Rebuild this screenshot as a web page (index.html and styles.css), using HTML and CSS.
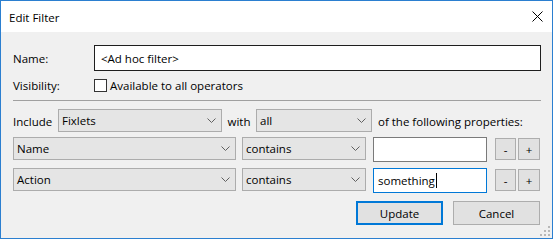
FILE: index.html
```html
<!DOCTYPE html>
<html lang="en">
<head>
    <meta charset="UTF-8">
    <title>Edit Filter</title>
    <link rel="stylesheet" href="styles.css">
</head>
<body>
    <div class="dialog">
        <div class="titlebar">
            <span class="title">Edit Filter</span>
            <svg class="close-icon" width="11" height="11" viewBox="0 0 11 11">
                <path d="M0.5 0.5 L10.5 10.5 M10.5 0.5 L0.5 10.5" stroke="#000" stroke-width="1"/>
            </svg>
        </div>

        <div class="content">
            <div class="field-row name-row">
                <span class="field-label">Name:</span>
                <div class="textbox textbox-dark">&lt;Ad hoc filter&gt;</div>
            </div>

            <div class="field-row visibility-row">
                <span class="field-label">Visibility:</span>
                <span class="checkbox"></span>
                <span class="checkbox-label">Available to all operators</span>
            </div>

            <div class="separator"></div>

            <div class="include-row">
                <span class="include-label">Include</span>
                <div class="dropdown dd-fixlets"><span>Fixlets</span><svg class="chevron" width="9" height="5" viewBox="0 0 9 5"><polyline points="0.5,0.5 4.5,4.5 8.5,0.5" fill="none" stroke="#606060"/></svg></div>
                <span class="with-label">with</span>
                <div class="dropdown dd-all"><span>all</span><svg class="chevron" width="9" height="5" viewBox="0 0 9 5"><polyline points="0.5,0.5 4.5,4.5 8.5,0.5" fill="none" stroke="#606060"/></svg></div>
                <span class="tail-label">of the following properties:</span>
            </div>

            <div class="condition-row first">
                <div class="dropdown dd-property"><span>Name</span><svg class="chevron" width="9" height="5" viewBox="0 0 9 5"><polyline points="0.5,0.5 4.5,4.5 8.5,0.5" fill="none" stroke="#606060"/></svg></div>
                <div class="dropdown dd-operator"><span>contains</span><svg class="chevron" width="9" height="5" viewBox="0 0 9 5"><polyline points="0.5,0.5 4.5,4.5 8.5,0.5" fill="none" stroke="#606060"/></svg></div>
                <div class="textbox value-box"></div>
                <button class="small-btn minus">-</button>
                <button class="small-btn plus">+</button>
            </div>

            <div class="condition-row second">
                <div class="dropdown dd-property"><span>Action</span><svg class="chevron" width="9" height="5" viewBox="0 0 9 5"><polyline points="0.5,0.5 4.5,4.5 8.5,0.5" fill="none" stroke="#606060"/></svg></div>
                <div class="dropdown dd-operator"><span>contains</span><svg class="chevron" width="9" height="5" viewBox="0 0 9 5"><polyline points="0.5,0.5 4.5,4.5 8.5,0.5" fill="none" stroke="#606060"/></svg></div>
                <div class="textbox value-box focused">something<span class="caret"></span></div>
                <button class="small-btn minus">-</button>
                <button class="small-btn plus">+</button>
            </div>

            <div class="button-row">
                <button class="dlg-btn default">Update</button>
                <button class="dlg-btn">Cancel</button>
            </div>

            <svg class="grip" width="11" height="11" viewBox="0 0 11 11">
                <rect x="8" y="0" width="2" height="2" fill="#b8b8b8"/>
                <rect x="4" y="4" width="2" height="2" fill="#b8b8b8"/>
                <rect x="8" y="4" width="2" height="2" fill="#b8b8b8"/>
                <rect x="0" y="8" width="2" height="2" fill="#b8b8b8"/>
                <rect x="4" y="8" width="2" height="2" fill="#b8b8b8"/>
                <rect x="8" y="8" width="2" height="2" fill="#b8b8b8"/>
            </svg>
        </div>
    </div>
</body>
</html>
```

FILE: styles.css
```css
body {
    margin: 0;
    background: #ffffff;
    font-family: "Open Sans", "Liberation Sans", sans-serif;
    font-size: 11.5px;
    color: #000;
}
.dialog {
    width: 553px;
    height: 239px;
    border: 1px solid #2b7fd0;
    box-sizing: border-box;
    display: flex;
    flex-direction: column;
}
.titlebar {
    height: 31px;
    flex: none;
    background: #ffffff;
    display: flex;
    align-items: center;
    justify-content: space-between;
    padding: 0 9px 0 8px;
}
.title {
    margin-top: 1px;
}
.close-icon {
    display: block;
}
.content {
    flex: 1;
    background: #f0f0f0;
    padding: 13px 11px 0 12px;
    position: relative;
}
.field-row {
    display: flex;
    align-items: center;
}
.field-label {
    width: 81px;
    flex: none;
}
.name-row {
    height: 26px;
}
.textbox {
    box-sizing: border-box;
    background: #ffffff;
    border: 1px solid #7a7a7a;
    display: flex;
    align-items: center;
    padding-left: 4px;
}
.textbox-dark {
    flex: 1;
    height: 26px;
    border-color: #1e1e1e;
    padding-left: 6px;
}
.visibility-row {
    margin-top: 8px;
    height: 13px;
}
.checkbox {
    width: 13px;
    height: 13px;
    box-sizing: border-box;
    border: 1px solid #333;
    background: #fff;
    margin-right: 3px;
    flex: none;
}
.separator {
    margin-top: 8px;
    height: 1px;
    background: #a0a0a0;
}
.include-row {
    margin-top: 8px;
    display: flex;
    align-items: center;
    height: 23px;
}
.include-label {
    width: 45px;
    flex: none;
    margin-top: 2px;
}
.with-label {
    width: 34px;
    text-align: center;
    flex: none;
    margin-top: 2px;
}
.tail-label {
    margin-left: 6px;
    margin-top: 2px;
}
.dropdown {
    box-sizing: border-box;
    height: 23px;
    background: #e5e5e5;
    border: 1px solid #acacac;
    display: flex;
    align-items: center;
    justify-content: space-between;
    padding: 0 5px 0 3px;
    flex: none;
}
.dropdown span {
    margin-top: -1px;
}
.chevron {
    display: block;
}
.dd-fixlets {
    width: 164px;
}
.dd-all {
    width: 116px;
}
.condition-row {
    display: flex;
    align-items: flex-start;
    height: 25px;
}
.condition-row.first {
    margin-top: 5px;
}
.condition-row.second {
    margin-top: 6px;
}
.dd-property {
    width: 223px;
}
.dd-operator {
    width: 124px;
    margin-left: 6px;
}
.value-box {
    width: 114px;
    height: 25px;
    margin-left: 7px;
}
.value-box.focused {
    border-color: #0078d7;
}
.caret {
    display: inline-block;
    width: 1px;
    height: 15px;
    background: #000;
    margin-left: 1px;
}
button {
    font-family: inherit;
    font-size: 11.5px;
    color: #000;
    background: #e1e1e1;
    border: 1px solid #adadad;
    padding: 0;
    box-sizing: border-box;
}
.small-btn {
    height: 22px;
    margin-top: 1px;
}
.small-btn.minus {
    width: 21px;
    margin-left: 8px;
}
.small-btn.plus {
    width: 22px;
    margin-left: 2px;
}
.button-row {
    margin-top: 8px;
    display: flex;
    justify-content: flex-end;
    gap: 10px;
    padding-right: 1px;
}
.dlg-btn {
    width: 87px;
    height: 24px;
}
.dlg-btn.default {
    border: 2px solid #0078d7;
}
.grip {
    position: absolute;
    right: 1px;
    bottom: 1px;
}
```
